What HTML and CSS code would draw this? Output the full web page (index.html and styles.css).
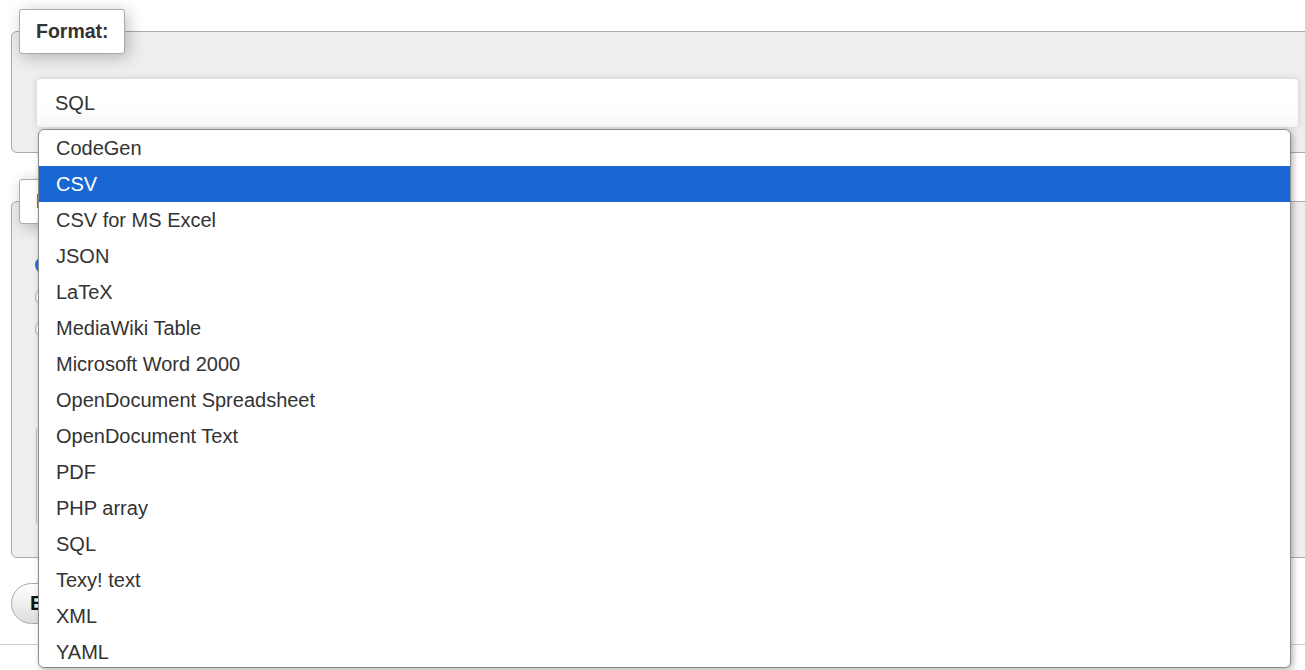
FILE: index.html
```html
<!DOCTYPE html>
<html lang="en">
<head>
<meta charset="utf-8">
<title>Export</title>
<link rel="stylesheet" href="styles.css">
</head>
<body>
<div class="page">
  <fieldset class="box format-box">
    <legend class="box-legend">Format:</legend>
    <div class="select-field">SQL</div>
  </fieldset>

  <fieldset class="box method-box">
    <legend class="box-legend">Export method:</legend>
    <div class="radio-row"><span class="radio checked"></span></div>
    <div class="radio-row"><span class="radio"></span></div>
    <div class="radio-row"><span class="radio"></span></div>
    <div class="options-area"></div>
  </fieldset>

  <div class="actions">
    <button class="btn">Export</button>
  </div>
</div>
<hr class="rule">

<ul class="dropdown">
  <li class="opt">CodeGen</li>
  <li class="opt selected">CSV</li>
  <li class="opt">CSV for MS Excel</li>
  <li class="opt">JSON</li>
  <li class="opt">LaTeX</li>
  <li class="opt">MediaWiki Table</li>
  <li class="opt">Microsoft Word 2000</li>
  <li class="opt">OpenDocument Spreadsheet</li>
  <li class="opt">OpenDocument Text</li>
  <li class="opt">PDF</li>
  <li class="opt">PHP array</li>
  <li class="opt">SQL</li>
  <li class="opt">Texy! text</li>
  <li class="opt">XML</li>
  <li class="opt">YAML</li>
</ul>
</body>
</html>
```

FILE: styles.css
```css
html, body {
  margin: 0;
  padding: 0;
  background: #fff;
  overflow: hidden;
  height: 670px;
}
body {
  font-family: "Liberation Sans", Arial, sans-serif;
  color: #333;
  position: relative;
}
.page {
  width: 1313px;
  padding: 9px 0 0 11px;
}
.box {
  margin: 0;
  border: 1px solid #aaa;
  border-radius: 6px;
  background: #eee;
  padding: 0 25px 25px 25px;
  min-width: 0;
}
.box-legend {
  margin-left: -18px;
  background: #fff;
  border: 1px solid #aaa;
  border-radius: 3px;
  box-shadow: 3px 3px 16px rgba(0, 0, 0, 0.25);
  padding: 0 15px 0 16px;
  height: 45px;
  box-sizing: border-box;
  line-height: 43px;
  font-weight: bold;
  font-size: 19.5px;
  color: #333;
}
.format-box {
  padding-top: 25px;
}
.select-field {
  height: 48px;
  box-sizing: border-box;
  background: linear-gradient(#fff 60%, #f6f6f6);
  border-radius: 4px;
  box-shadow: 0 0 7px rgba(0, 0, 0, 0.14);
  padding-left: 18px;
  line-height: 48px;
  font-size: 20px;
  color: #333;
}
.method-box {
  margin-top: 26px;
  padding-top: 25px;
  padding-bottom: 32px;
}
.radio-row {
  display: flex;
  align-items: center;
  height: 32px;
}
.radio {
  width: 18px;
  height: 18px;
  border-radius: 50%;
  border: 1px solid #aaa;
  background: #fff;
  box-sizing: border-box;
  margin-left: -2px;
}
.radio.checked {
  border: 5px solid #1a73e8;
}
.options-area {
  margin-top: 82px;
  height: 96px;
  width: 600px;
  border: 1px solid #bbb;
  border-radius: 4px;
  background: #f4f4f4;
  margin-left: -1px;
}
.actions {
  padding-top: 25px;
}
.btn {
  height: 41px;
  padding: 0 22px 0 18px;
  border: 1px solid #aaa;
  border-radius: 21px;
  background: linear-gradient(#fff, #ddd);
  font-family: "Liberation Sans", Arial, sans-serif;
  font-weight: bold;
  font-size: 20px;
  color: #111;
}
.rule {
  margin: 20px 0 0 0;
  border: 0;
  border-top: 1px solid #ccc;
  height: 0;
}
.dropdown {
  position: absolute;
  left: 38px;
  top: 129px;
  width: 1253px;
  height: 539px;
  box-sizing: border-box;
  margin: 0;
  padding: 0;
  list-style: none;
  background: #fff;
  border: 1px solid #8c8c8c;
  border-radius: 6px;
  box-shadow: 2px 2px 6px rgba(0, 0, 0, 0.3);
  overflow: hidden;
}
.opt {
  height: 36px;
  line-height: 36px;
  padding-left: 17px;
  font-size: 20px;
  color: #333;
  white-space: nowrap;
}
.opt.selected {
  background: #1967d2;
  color: #fff;
}
```
